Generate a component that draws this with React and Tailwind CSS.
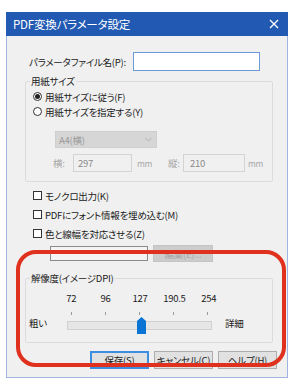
import React from 'react';

const font = "font-['Noto_Sans_CJK_JP','Noto_Sans',sans-serif] [font-feature-settings:'palt']";

const Check = ({ label }) => (
  <div className="flex items-center h-[19px] pl-[26px]">
    <span className="w-[9px] h-[9px] border border-[#333] bg-white" />
    <span className="ml-[3px]">{label}</span>
  </div>
);

const Radio = ({ label, on }) => (
  <div className="flex items-center h-[15px] pl-[7px]">
    <span className="w-[9px] h-[9px] rounded-full border border-[#333] bg-white flex items-center justify-center">
      {on && <span className="w-[5px] h-[5px] rounded-full bg-[#222]" />}
    </span>
    <span className="ml-[3px]">{label}</span>
  </div>
);

const Btn = ({ children, primary }) => (
  <div
    className={
      'w-[59px] h-[18px] flex items-center justify-center bg-[#e1e1e1] ' +
      (primary ? 'border-2 border-[#3c8ee0]' : 'border border-[#adadad]')
    }
  >
    {children}
  </div>
);

export default function App() {
  const ticks = ['72', '96', '127', '190.5', '254'];

  return (
    <div className={`relative w-[300px] h-[388px] bg-white pt-[12px] pl-[6px] text-[9.5px] leading-[14px] text-[#1b1b1b] whitespace-nowrap tracking-[-0.25px] ${font}`}>
      <div className="w-[282px] h-[366px] flex flex-col">
        {/* title bar */}
        <div className="h-[24px] bg-[#2159b3] flex items-center justify-between pl-[7px] pr-[9px] text-white text-[11.5px] tracking-[-0.2px]">
          <span>PDF変換パラメータ設定</span>
          <svg width="10" height="10" viewBox="0 0 10 10">
            <path d="M1 1 L9 9 M9 1 L1 9" stroke="white" strokeWidth="1.3" />
          </svg>
        </div>

        <div className="flex-1 bg-[#f0f0f0] border-x border-b border-[#9fb4e0] flex flex-col">
          {/* file name */}
          <div className="flex items-center pt-[16px] pl-[22px]">
            <span className="w-[104px]">パラメータファイル名(P):</span>
            <div className="w-[127px] h-[19px] bg-white border border-[#6b9ad8]" />
          </div>

          {/* paper size */}
          <fieldset className="mt-[3px] ml-[18px] w-[248px] h-[108px] border border-[#dcdcdc] rounded-[2px]">
            <legend className="ml-[4px] px-[1px]">用紙サイズ</legend>
            <div className="pt-[1px]">
              <Radio label="用紙サイズに従う(F)" on />
              <Radio label="用紙サイズを指定する(Y)" />
            </div>
            <div className="mt-[12px] ml-[29px] w-[102px] h-[17px] bg-[#d6d6d6] border border-[#cfcfcf] flex items-center justify-between pl-[3px] pr-[4px] text-[#9a9a9a]">
              <span>A4(横)</span>
              <svg width="7" height="5" viewBox="0 0 7 5">
                <path d="M0.5 1 L3.5 4 L6.5 1" stroke="#b0b0b0" fill="none" />
              </svg>
            </div>
            <div className="mt-[6px] ml-[27px] flex items-center text-[#a8a8a8]">
              <span className="w-[20px]">横:</span>
              <div className="w-[59px] h-[18px] border border-[#d4d4d4] flex items-center pl-[4px] text-[#8a8a8a]">297</div>
              <span className="ml-[5px] text-[8.5px] w-[31px]">mm</span>
              <span className="w-[15px]">縦:</span>
              <div className="w-[62px] h-[18px] border border-[#d4d4d4] flex items-center pl-[6px] text-[#8a8a8a]">210</div>
              <span className="ml-[3px] text-[8.5px]">mm</span>
            </div>
          </fieldset>

          {/* options */}
          <div className="mt-[4px]">
            <Check label="モノクロ出力(K)" />
            <Check label="PDFにフォント情報を埋め込む(M)" />
            <Check label="色と線幅を対応させる(Z)" />
          </div>
          <div className="mt-[2px] ml-[43px] flex items-center">
            <div className="w-[98px] h-[15px] border border-[#8a8a8a] bg-[#f4f4f4]" />
            <div className="ml-[5px] w-[60px] h-[17px] bg-[#cccccc] border border-[#c4c4c4] flex items-center justify-center text-[#a8a8a8]">
              編集(E)...
            </div>
          </div>

          {/* resolution */}
          <fieldset className="mt-[9px] ml-[18px] w-[248px] h-[72px] border border-[#dcdcdc] rounded-[2px]">
            <legend className="ml-[4px] px-[1px]">解像度(イメージDPI)</legend>
            <div className="mt-[6px] ml-[28px] w-[172px] grid grid-cols-5 text-center">
              {ticks.map((t) => (
                <span key={t}>{t}</span>
              ))}
            </div>
            <div className="mt-[7px] ml-[3px] flex items-center">
              <span className="w-[38px]">粗い</span>
              <div className="relative w-[145px] h-[22px]">
                <div className="flex justify-between px-[4px]">
                  {ticks.map((t) => (
                    <span key={t} className="w-px h-[3px] bg-[#9a9a9a]" />
                  ))}
                </div>
                <div className="mt-[6px] h-[9px] bg-[#e6e6e6] border border-[#d0d0d0]" />
                <svg className="absolute left-[70px] top-[5px]" width="9" height="17" viewBox="0 0 9 17">
                  <path d="M4.5 0 L9 4 L9 17 L0 17 L0 4 Z" fill="#0a74d4" />
                </svg>
              </div>
              <span className="ml-[13px]">詳細</span>
            </div>
          </fieldset>

          {/* buttons */}
          <div className="mt-[8px] flex justify-end gap-[5px] pr-[10px]">
            <Btn primary>保存(S)</Btn>
            <Btn>キャンセル(C)</Btn>
            <Btn>ヘルプ(H)</Btn>
          </div>
        </div>
      </div>

      {/* red annotation */}
      <div className="absolute left-[16px] top-[250px] w-[270px] h-[117px] border-[4px] border-[#e0301e] rounded-[20px]" />
    </div>
  );
}
